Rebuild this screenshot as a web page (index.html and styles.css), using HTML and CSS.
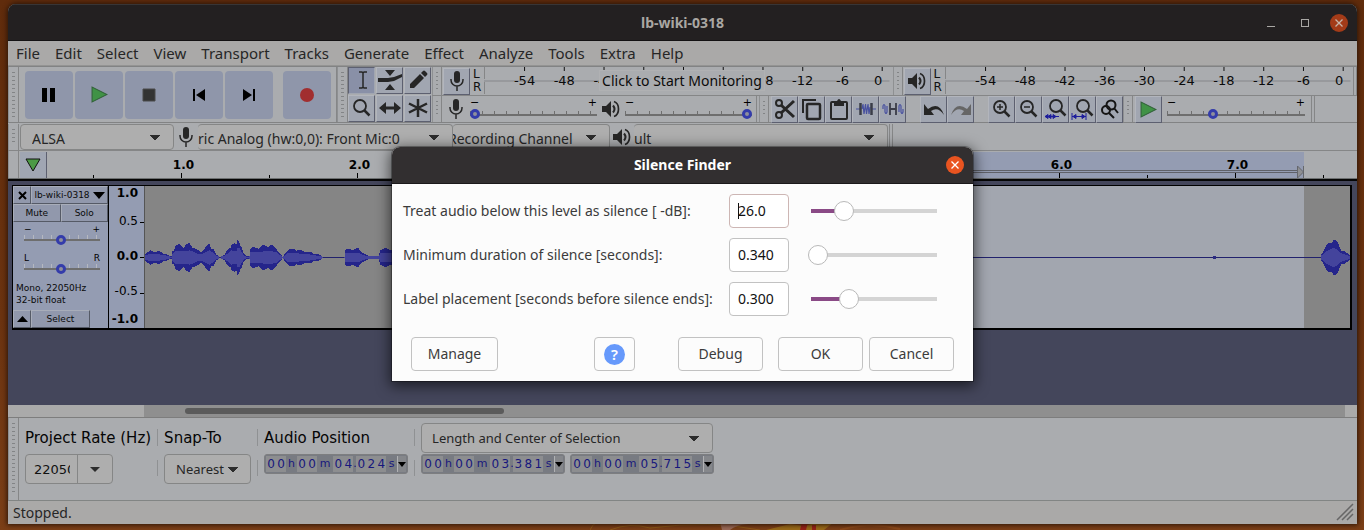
FILE: index.html
```html
<!DOCTYPE html>
<html lang="en">
<head>
<meta charset="utf-8">
<title>lb-wiki-0318</title>
<link rel="stylesheet" href="styles.css">
</head>
<body>
<svg class="defs" aria-hidden="true">
  <symbol id="mic" viewBox="0 0 14 20"><rect x="4" y="0" width="6" height="12" rx="3" fill="#262626"/><path d="M1 8v1a6 6 0 0 0 12 0V8M7 15v5" fill="none" stroke="#262626" stroke-width="1.500"/></symbol>
  <symbol id="speaker" viewBox="0 0 20 18"><path d="M1 6h4l5-5v16l-5-5H1z" fill="#262626"/><path d="M12 5.500q3 3.500 0 7" fill="none" stroke="#262626" stroke-width="2"/><path d="M13 1.500c6 2 6 13 0 15" fill="none" stroke="#262626" stroke-width="1.700"/></symbol>
  <symbol id="cross" viewBox="0 0 10 10"><path d="M1.500 1.500l7 7m0-7l-7 7" stroke="currentColor" stroke-width="1.300"/></symbol>
  <symbol id="play" viewBox="0 0 16 16"><path d="M1 1v14l14-7z" fill="#409246" stroke="#32623a"/></symbol>
  <symbol id="lens" viewBox="0 0 20 20"><circle cx="8" cy="8" r="6" fill="none" stroke="#262626" stroke-width="1.800"/><path d="M12.500 12.500l5 5" stroke="#262626" stroke-width="2.500"/></symbol>
</svg>
<svg class="wallpaper" aria-hidden="true" viewBox="0 0 360 8">
  <path d="M0 8q2-6 8-8M20 8q20-8 40-2 60-8 110 2" fill="none" stroke="#8f5b18"/>
  <path d="M130 0l28 2q-12 1-18 6h-8z" fill="#9a6a58"/>
  <path d="M176 8l24-6 14 2 14-4h16l-10 8z" fill="#9a6b18"/>
  <path d="M212 0h6l-2 8h-6zM222 3h4v5h-4z" fill="#962018"/>
  <path d="M250 8q30-9 60-1" fill="none" stroke="#8d4a1b" stroke-width="2"/>
</svg>

<main class="window">
  <header class="titlebar">
    <span class="titlebar-name">lb-wiki-0318</span>
    <div class="window-controls">
      <button class="control" aria-label="Minimize"><svg width="10" height="10"><path d="M1 8.500h8" stroke="#a9a7a4"/></svg></button>
      <button class="control" aria-label="Maximize"><svg width="10" height="10"><rect x="1.500" y="1.500" width="7" height="7" fill="none" stroke="#a9a7a4"/></svg></button>
      <button class="control close" aria-label="Close window"><svg width="10" height="10"><use href="#cross"/></svg></button>
    </div>
  </header>

  <nav class="menubar">
    <button>File</button><button>Edit</button><button>Select</button><button>View</button><button>Transport</button><button>Tracks</button><button>Generate</button><button>Effect</button><button>Analyze</button><button>Tools</button><button>Extra</button><button>Help</button>
  </nav>

  <section class="dock">
    <div class="toolbar transport">
      <i class="grip"></i>
      <div class="transport-buttons">
        <button aria-label="Pause"><svg width="14" height="14"><path d="M0 0h5v14H0zM8 0h5v14H8z"/></svg></button>
        <button aria-label="Play"><svg width="17" height="17"><use href="#play"/></svg></button>
        <button aria-label="Stop"><svg width="14" height="14"><path d="M1 1h12v12H1z" fill="#333" stroke="#4a4a4a"/></svg></button>
        <button aria-label="Skip to start"><svg width="14" height="14"><path d="M1 1h2v12H1zM13 1v12L4 7z"/></svg></button>
        <button aria-label="Skip to end"><svg width="14" height="14"><path d="M11 1h2v12h-2zM1 1v12l9-6z"/></svg></button>
        <button class="record" aria-label="Record"><svg width="14" height="14"><circle cx="7" cy="7" r="7" fill="#a12e2f"/></svg></button>
      </div>
    </div>
    <div class="toolbar tools">
      <i class="grip"></i>
      <div class="tool-grid">
        <button class="tool active" aria-label="Selection tool"><svg width="20" height="20"><path d="M7 2h3l1 1 1-1h3M7 18h3l1-1 1 1h3M11 3v14" fill="none" stroke="#262626" stroke-width="1.500"/></svg></button>
        <button class="tool" aria-label="Envelope tool"><svg width="24" height="20"><path d="M7 0h10l-5 6zM7 20h10l-5-6zM0 8h10l6-1 8-3v3l-8 4-6 1H0z" fill="#262626"/></svg></button>
        <button class="tool" aria-label="Draw tool"><svg width="20" height="20"><path d="M2 14L12 4l4 4L6 18H2zM13 3l2-2q1-1 2 0l2 2q1 1 0 2l-2 2z" fill="#262626"/></svg></button>
        <button class="tool" aria-label="Zoom tool"><svg width="20" height="20"><use href="#lens"/></svg></button>
        <button class="tool" aria-label="Time shift tool"><svg width="22" height="14"><path d="M0 7l7-6v4.500h8V1l7 6-7 6V8.500H7V13z" fill="#262626"/></svg></button>
        <button class="tool" aria-label="Multi tool"><svg width="20" height="20"><path d="M10 1v18M1 5.500l18 9M1 14.500l18-9" stroke="#262626" stroke-width="2.500"/></svg></button>
      </div>
    </div>
    <div class="dock-rows">
      <div class="dock-row">
        <div class="toolbar meter">
          <i class="grip"></i>
          <button class="tool" aria-label="Recording meter"><svg width="14" height="20"><use href="#mic"/></svg></button>
          <span class="channels"><span>L</span><span>R</span></span>
          <div class="scale"><svg class="scale-svg"></svg><button class="monitor">Click to Start Monitoring</button></div>
        </div>
        <div class="toolbar meter">
          <i class="grip"></i>
          <button class="tool" aria-label="Playback meter"><svg width="20" height="18"><use href="#speaker"/></svg></button>
          <span class="channels"><span>L</span><span>R</span></span>
          <div class="scale"><svg class="scale-svg"></svg></div>
        </div>
        <i class="end"></i>
      </div>
      <div class="dock-row">
        <div class="toolbar mixer">
          <i class="grip"></i>
          <svg class="mixer-icon" height="20"><use href="#mic" width="20"/></svg>
          <label class="level"><span>−</span><span>+</span><input type="range" min="0" max="100" value="0" aria-label="Recording volume"></label>
          <svg class="mixer-icon" height="18"><use href="#speaker" width="20"/></svg>
          <label class="level"><span>−</span><span>+</span><input type="range" min="0" max="100" value="100" aria-label="Playback volume"></label>
        </div>
        <div class="toolbar edit">
          <i class="grip"></i>
          <div class="tool-set">
            <button class="tool" aria-label="Cut"><svg width="22" height="22"><g fill="none" stroke="#262626" stroke-width="2"><circle cx="5" cy="5" r="3"/><circle cx="5" cy="17" r="3"/><path d="M7 7l13 12M7 15L20 3" stroke-width="3"/></g></svg></button>
            <button class="tool" aria-label="Copy"><svg width="22" height="22"><path d="M2 15V2h13" fill="none" stroke="#262626" stroke-width="2"/><rect x="6" y="6" width="13" height="15" rx="1" fill="none" stroke="#262626" stroke-width="2.500"/></svg></button>
            <button class="tool" aria-label="Paste"><svg width="22" height="22"><rect x="3" y="4" width="16" height="17" rx="1" fill="none" stroke="#262626" stroke-width="2"/><path d="M6 3h3q2-4 4 0h3v5H6z" fill="#262626"/></svg></button>
            <button class="tool" aria-label="Trim audio"><svg width="22" height="20"><path d="M1 10h4M17 10h4M7 10l1-5 1 10 1.500-10 1 10 1.500-10 1 10 1-7" fill="none" stroke="#4851a0" stroke-width="1.200"/><path d="M5.500 4v12M16.500 4v12" stroke="#3a3c48" stroke-width="2.500"/></svg></button>
            <button class="tool" aria-label="Silence audio"><svg width="22" height="20"><path d="M1 10V7q1-3 2 0v6q1 3 2 0V7M17 13V7q1-3 2 0v6q1 3 2 0v-3" fill="none" stroke="#4851a0" stroke-width="1.200"/><path d="M8 4v12M14 4v12M8 10h6" stroke="#3a3c48" stroke-width="1.800"/></svg></button>
          </div>
          <div class="tool-set">
            <button class="tool" aria-label="Undo"><svg width="22" height="16"><path d="M1 3v11h10l-3-4q7-5 13 4-5-14-16-6z" fill="#262626"/></svg></button>
            <button class="tool" aria-label="Redo"><svg width="22" height="16"><path d="M21 3v11H11l3-4q-7-5-13 4 5-14 16-6z" fill="#666"/></svg></button>
          </div>
          <div class="tool-set">
            <button class="tool" aria-label="Zoom in"><svg width="20" height="20"><use href="#lens"/><path d="M5 8h6M8 5v6" stroke="#262626" stroke-width="1.500"/></svg></button>
            <button class="tool" aria-label="Zoom out"><svg width="20" height="20"><use href="#lens"/><path d="M5 8h6" stroke="#262626" stroke-width="1.500"/></svg></button>
            <button class="tool" aria-label="Fit selection"><svg width="24" height="22"><use href="#lens" x="4" width="20" height="20"/><path d="M1 18.500h14M1 18.500l3-2v4zM7 16.500v4l-3-2zM9 16.500v4l3-2z" fill="#1e1e9c" stroke="#1e1e9c"/></svg></button>
            <button class="tool" aria-label="Fit project"><svg width="24" height="22"><use href="#lens" x="4" width="20" height="20"/><path d="M1 15v7M15 15v7M1 18.500h14M2 18.500l3-2v4zM14 18.500l-3-2v4z" fill="#1e1e9c" stroke="#1e1e9c"/></svg></button>
            <button class="tool" aria-label="Zoom toggle"><svg width="22" height="20"><g fill="none" stroke="#151515" stroke-width="2"><circle cx="12" cy="6" r="4.500"/><circle cx="7" cy="11" r="4"/><path d="M15 9l4 5M10 14l5 5"/></g></svg></button>
          </div>
        </div>
        <div class="toolbar speed">
          <i class="grip"></i>
          <button class="tool" aria-label="Play at speed"><svg width="17" height="17"><use href="#play"/></svg></button>
          <label class="level"><span>−</span><span>+</span><input type="range" min="0" max="100" value="32" aria-label="Playback speed"></label>
        </div>
        <i class="end"></i>
      </div>
    </div>
  </section>

  <section class="devices">
    <i class="grip"></i>
    <select class="combo host" aria-label="Audio host"><option>ALSA</option></select>
    <svg class="device-icon" width="24" height="20"><use href="#mic" width="24"/></svg>
    <select class="combo input-device" aria-label="Recording device"><option>ric Analog (hw:0,0): Front Mic:0</option></select>
    <select class="combo channel" aria-label="Recording channels"><option>Recording Channel</option></select>
    <svg class="device-icon" width="24" height="18"><use href="#speaker" width="24"/></svg>
    <select class="combo output-device" aria-label="Playback device"><option>ult</option></select>
    <i class="end"></i>
  </section>

  <section class="ruler">
    <i class="grip blank"></i>
    <button class="pin" aria-label="Pinned play head"><svg width="18" height="16"><path d="M2 2h14L9 14z" fill="#4c9a45" stroke="#111"/></svg></button>
    <svg class="ruler-svg" id="ruler"></svg>
  </section>

  <section class="workspace">
    <div class="track">
      <div class="track-panel">
        <div class="panel-row">
          <button class="bevel square" aria-label="Close track"><svg width="9" height="9"><path d="M1 1l7 7m0-7L1 8" stroke="#000" stroke-width="2"/></svg></button>
          <button class="bevel name">lb-wiki-0318<svg width="12" height="7"><path d="M0 0h12L6 7z"/></svg></button>
        </div>
        <div class="panel-row"><button class="bevel">Mute</button><button class="bevel">Solo</button></div>
        <label class="level track-level"><span>−</span><span>+</span><input type="range" value="49" aria-label="Gain"></label>
        <label class="level track-level pan"><span>L</span><span>R</span><input type="range" value="49" aria-label="Pan"></label>
        <p class="track-info">Mono, 22050Hz<br>32-bit float</p>
        <div class="panel-row foot">
          <button class="bevel square" aria-label="Collapse track"><svg width="11" height="6"><path d="M0 6h11L5.500 0z"/></svg></button>
          <button class="bevel select-track">Select</button>
        </div>
      </div>
      <div class="amplitude"><b>1.0</b><span>0.5</span><b>0.0</b><span>-0.5</span><b>-1.0</b></div>
      <svg class="wave" id="wave"></svg>
    </div>
  </section>

  <div class="scrollbar"><div class="scroll-lane"><div class="scroll-thumb"></div></div></div>

  <section class="selection-bar">
    <i class="grip"></i>
    <div class="field">
      <label class="field-name" for="rate">Project Rate (Hz)</label>
      <div class="combo-box"><input id="rate" value="22050"><button aria-label="Choose rate"><svg width="10" height="5"><path d="M0 0h10L5 5z" fill="#2c2c2c"/></svg></button></div>
    </div>
    <i class="rule"></i>
    <div class="field">
      <label class="field-name" for="snap">Snap-To</label>
      <select class="combo snap" id="snap"><option>Nearest</option></select>
    </div>
    <i class="rule"></i>
    <div class="field position">
      <span class="field-name">Audio Position</span>
      <div class="time"><b>0</b><b>0</b><i>h</i><b>0</b><b>0</b><i class="wide">m</i><b>0</b><b>4</b><i class="dot">.</i><b>0</b><b>2</b><b>4</b><i>s</i><button aria-label="Time format"><svg width="8" height="5"><path d="M0 0h8L4 5z"/></svg></button></div>
    </div>
    <i class="rule"></i>
    <div class="field range">
      <select class="combo mode" aria-label="Selection mode"><option>Length and Center of Selection</option></select>
      <div class="times">
        <div class="time"><b>0</b><b>0</b><i>h</i><b>0</b><b>0</b><i class="wide">m</i><b>0</b><b>3</b><i class="dot">.</i><b>3</b><b>8</b><b>1</b><i>s</i><button aria-label="Length format"><svg width="8" height="5"><path d="M0 0h8L4 5z"/></svg></button></div>
        <div class="time"><b>0</b><b>0</b><i>h</i><b>0</b><b>0</b><i class="wide">m</i><b>0</b><b>5</b><i class="dot">.</i><b>7</b><b>1</b><b>5</b><i>s</i><button aria-label="Center format"><svg width="8" height="5"><path d="M0 0h8L4 5z"/></svg></button></div>
      </div>
    </div>
  </section>

  <footer class="status"><span>Stopped.</span><svg width="18" height="18"><path d="M1 17L17 1M6 17L17 6M11 17l6-6" stroke="#666" stroke-width="1.500"/></svg></footer>
</main>

<div class="dialog" role="dialog" aria-labelledby="dialog-title">
  <header class="dialog-title"><span id="dialog-title">Silence Finder</span><button class="control close" aria-label="Close dialog"><svg width="10" height="10"><use href="#cross"/></svg></button></header>
  <form class="dialog-form">
    <label for="level">Treat audio below this level as silence [ -dB]:</label>
    <div class="entry focused"><input id="level" value="26.0"></div>
    <input class="slider" type="range" value="23" style="--fill:23%" aria-label="Level">
    <label for="duration">Minimum duration of silence [seconds]:</label>
    <div class="entry"><input id="duration" value="0.340"></div>
    <input class="slider" type="range" value="0" style="--fill:0%" aria-label="Duration">
    <label for="placement">Label placement [seconds before silence ends]:</label>
    <div class="entry"><input id="placement" value="0.300"></div>
    <input class="slider" type="range" value="28" style="--fill:28%" aria-label="Placement">
  </form>
  <div class="dialog-actions">
    <button>Manage</button>
    <button class="help" aria-label="Help"><span>?</span></button>
    <button class="debug">Debug</button>
    <button class="ok">OK</button>
    <button>Cancel</button>
  </div>
</div>
<script src="app.js"></script>
</body>
</html>
```
FILE: styles.css
```css
* { box-sizing: border-box; }
body {
  margin: 0;
  min-height: 100vh;
  overflow: hidden;
  background: linear-gradient(#602c0c, #6b3310 60%, #7b3f17);
  font: 14px/20px "Noto Sans", sans-serif;
  color: #262626;
}
button, input, select { font: inherit; color: inherit; margin: 0; padding: 0; border: 0; border-radius: 0; background: none; }
select { appearance: none; }
button { display: flex; align-items: center; justify-content: center; }
svg { flex: none; overflow: visible; }
.defs { position: absolute; width: 0; height: 0; }
.wallpaper { position: absolute; left: 590px; bottom: 0; width: 360px; height: 8px; overflow: hidden; }

.window {
  position: relative;
  display: flex;
  flex-direction: column;
  height: calc(100vh - 10px);
  margin: 4px 7px 6px 8px;
  background: #aaacaf;
  border-radius: 8px 8px 0 0;
  box-shadow: 0 0 5px 1px #2b1508;
  overflow: hidden;
}
.titlebar {
  position: relative;
  display: flex;
  align-items: center;
  justify-content: center;
  height: 37px;
  background: #232021;
  border-top: 1px solid #383536;
  border-bottom: 1px solid #141213;
  color: #aaa7a3;
  font-weight: 700;
}
.window-controls { position: absolute; right: 9px; display: flex; align-items: center; gap: 16px; }
.control { width: 18px; height: 18px; }
.control.close { border-radius: 50%; background: #a33b18; color: #c6b5aa; }

.menubar { display: flex; gap: 15px; height: 25px; padding: 0 8px 1px; background: #aaa9a8; border-bottom: 1px solid #949493; font-size: 15px; }

.dock { display: flex; height: 57px; border-top: 1px solid #828384; border-bottom: 1px solid #828384; }
.toolbar { display: flex; align-items: center; }
.grip {
  flex: none;
  align-self: stretch;
  width: 11px;
  padding: 5px 3px;
  border-right: 1px solid #858687;
  border-left: 1px solid #8e9092;
  background: repeating-linear-gradient(#828486 0 1px, transparent 1px 4px) content-box;
}
.grip.blank { background: none; }
.end { flex: none; width: 4px; align-self: stretch; border: 1px solid #858687; border-width: 0 1px; }
.transport-buttons { display: flex; gap: 2px; padding: 0 5px 0 6px; }
.transport-buttons button { width: 48px; height: 48px; border-radius: 4px; background: #8f96aa; }
.transport-buttons .record { margin-left: 8px; }
.tools { border-left: 1px solid #858687; }
.tool-grid { display: grid; grid-template-columns: repeat(3, 28px); grid-template-rows: repeat(2, 28px); }
.tool { flex: none; width: 27px; height: 27px; background: #a1a6b1; border: 1px solid #b2b5bc; border-right-color: #5d6070; border-bottom-color: #5d6070; overflow: hidden; }
.tool.active { background: #8990a7; border-color: #5d6070 #a1a6b1 #a1a6b1 #5d6070; }

.dock-rows { flex: 1; display: flex; flex-direction: column; min-width: 0; }
.dock-row { display: flex; height: 28px; }
.dock-row + .dock-row { height: 27px; border-top: 1px solid #858687; }
.dock-rows .grip { width: 10px; }
.meter { flex: 1; gap: 1px; }
.channels { display: flex; flex-direction: column; width: 12px; padding-left: 2px; font: 12px/13px "DejaVu Sans", sans-serif; color: #111; }
.scale { position: relative; flex: 1; align-self: stretch; margin-right: 3px; }
.scale-svg { width: 100%; height: 27px; font: 13px "DejaVu Sans", sans-serif; fill: #0b0b0b; }
.monitor { position: absolute; left: 115px; top: 3px; width: 166px; height: 21px; background: #aaacaf; border: 1px solid #b0b1b3; color: #0b0b0b; }
.mixer { flex: none; gap: 4px; padding-right: 4px; border-right: 1px solid #858687; }
.mixer-icon { width: 20px; }
.level { display: grid; grid-template-columns: 1fr 1fr; width: 127px; font: 11px/10px "DejaVu Sans", sans-serif; color: #000; }
.level span:nth-child(2) { text-align: right; }
.level input {
  grid-column: 1 / 3;
  appearance: none;
  width: 100%;
  height: 12px;
  background:
    linear-gradient(#6e6e6e, #6e6e6e) 0 6px / 100% 2px no-repeat,
    repeating-linear-gradient(90deg, #6e6e6e 0 1px, transparent 1px 12px) 0 3px / 100% 3px no-repeat;
}
.level input::-webkit-slider-thumb { appearance: none; width: 10px; height: 10px; border-radius: 50%; border: 3px solid #343caa; background: #8e8f9b; }
.edit { flex: none; gap: 2px; }
.mixer + .edit { margin-left: 2px; }
.tool-set { display: flex; margin-right: 12px; }
.tool-set:last-child { margin-right: 0; }
.speed { flex: none; gap: 2px; padding-right: 6px; }
.speed .level { width: 138px; margin-left: 3px; }

.devices { display: flex; align-items: stretch; height: 28px; border-bottom: 1px solid #858687; padding-top: 1px; }
.combo {
  padding: 0 10px;
  border: 1px solid #858686;
  border-radius: 4px;
  color: #262626;
  background:
    linear-gradient(to bottom right, #2c2c2c 50%, transparent 51%) right 13px center / 5px 5px no-repeat,
    linear-gradient(to bottom left, #2c2c2c 50%, transparent 51%) right 18px center / 5px 5px no-repeat,
    #aeaeae;
}
.devices .combo { padding: 3px 10px 0 0; border-left-width: 0; }
.devices .host { width: 154px; margin-left: 1px; padding-left: 11px; border-left-width: 1px; }
.device-icon { width: 24px; align-self: center; }
.input-device { width: 255px; }
.channel { width: 157px; text-indent: -5px; }
.output-device { width: 254px; margin-right: 1px; }

.ruler { display: flex; height: 28px; border-bottom: 1px solid #6c6f70; }
.pin { width: 27px; margin: 1px 0 0 1px; background: #a0a6b3; border-right: 1px solid #5d6070; }
.ruler-svg { flex: 1; width: auto; min-width: 0; height: 27px; font: 700 12px "DejaVu Sans", sans-serif; overflow: hidden; }

.workspace { flex: 1; min-height: 0; padding: 4px 5px 0 4px; border-top: 2px solid #050505; background: #44465b; }
.track { display: flex; height: 145px; border: 1px solid #000; border-right-width: 2px; border-bottom-width: 2px; background: #949cb2; }
.track-panel { display: flex; flex-direction: column; width: 96px; border-right: 1px solid #000; font: 9px/12px "DejaVu Sans", sans-serif; color: #0a0a0a; }
.panel-row { display: flex; height: 18px; }
.bevel { flex: 1; border: 1px solid #a8adb9; border-right-color: #555a66; border-bottom-color: #555a66; background: #9198ac; }
.bevel.square { flex: none; width: 18px; }
.bevel.name { gap: 3px; white-space: nowrap; }
.track-level { width: 76px; margin: 3px 0 0 11px; line-height: 9px; font-size: 9px; }
.track-level.pan { margin-top: 9px; }
.track-level input { height: 11px; background: linear-gradient(#6e6e6e, #6e6e6e) 0 5px / 100% 2px no-repeat, repeating-linear-gradient(90deg, #b5b8c0 0 1px, transparent 1px 9px) 0 1px / 100% 4px no-repeat; }
.track-info { margin: 8px 0 0 3px; }
.foot { margin-top: auto; }
.select-track { flex: none; width: 59px; }
.amplitude {
  display: grid;
  grid-template-rows: 13px 43px 27px 44px 11px;
  align-items: center;
  width: 36px;
  padding-right: 6px;
  text-align: right;
  font: 12px/12px "DejaVu Sans", sans-serif;
  color: #000;
  border-right: 1px solid #555;
  background:
    linear-gradient(#000, #000) right 36px / 4px 1px no-repeat,
    linear-gradient(#000, #000) right 71px / 4px 1px no-repeat,
    linear-gradient(#000, #000) right 107px / 4px 1px no-repeat;
}
.wave { flex: 1; width: auto; min-width: 0; height: 142px; background: #858585; overflow: hidden; }

.scrollbar { height: 13px; padding: 0 12px 0 136px; background: #aaa; border-bottom: 1px solid #7d7d7d; }
.scroll-lane { height: 12px; padding: 3px 0 0 41px; background: #8f8f8f; }
.scroll-thumb { width: 319px; height: 6px; border-radius: 3px; background: #5b5b5b; }

.selection-bar { display: flex; height: 83px; font-family: "DejaVu Sans", sans-serif; border-bottom: 1px solid #828584; }
.selection-bar > .grip { margin-right: 6px; }
.field { padding-top: 10px; }
.field-name { display: block; height: 26px; font-size: 15px; color: #050505; }
.rule { width: 1px; margin: 11px 6px 24px; background: linear-gradient(#8f9193 17px, transparent 17px 31px, #8f9193 31px); }
.combo-box { display: flex; width: 88px; height: 30px; border: 1px solid #858686; border-radius: 4px; background: #aeaeae; overflow: hidden; }
.combo-box input { width: 36px; margin: 0 7px 0 8px; font: 13px "DejaVu Sans", sans-serif; color: #111; }
.combo-box button { flex: 1; border-left: 1px solid #858686; }
.combo.snap { width: 87px; height: 30px; padding-left: 11px; background-position: right 12px center, right 17px center, 0 0; font: 13px "Noto Sans", sans-serif; }
.field.range { padding-top: 5px; }
.combo.mode { display: block; width: 292px; height: 30px; margin-bottom: 1px; font: 13px "Noto Sans", sans-serif; }
.times { display: flex; gap: 5px; }
.time { display: flex; width: 144px; height: 20px; padding: 1px; border: 1px solid #7d7e80; border-radius: 3px; background: #787b82; font: 12px/16px "DejaVu Sans", sans-serif; color: #17177d; }
.time b { width: 10px; font-weight: 400; text-align: center; background: #8d8e90; }
.time i { flex: 2; font-style: normal; font-size: 11px; text-align: center; }
.time i.wide { flex: 3; }
.time i.dot { flex: none; width: 3px; }
.time button { width: 9px; border-left: 1px solid #b0b1b3; background: #85878b; }

.status { display: flex; justify-content: space-between; height: 23px; padding: 2px 3px 0 5px; background: #aaa9a8; }

.dialog {
  position: absolute;
  left: 392px;
  top: 147px;
  width: 581px;
  background: #fcfcfc;
  border-radius: 8px 8px 0 0;
  box-shadow: 0 3px 14px 2px rgba(0, 0, 0, .6), 0 0 0 1px rgba(0, 0, 0, .3);
  color: #3b3b3b;
}
.dialog-title { position: relative; display: flex; align-items: center; justify-content: center; height: 37px; border-radius: 8px 8px 0 0; background: #322f30; border-bottom: 1px solid #1c1a1b; color: #fff; font-weight: 700; }
.dialog-title .close { position: absolute; right: 9px; background: #e95420; color: #fff; }
.dialog-form { display: grid; grid-template-columns: 316px 60px 141px; column-gap: 10px; row-gap: 10px; align-items: center; padding: 10px 11px 0; }
.dialog-form label { white-space: nowrap; }
.entry { display: flex; height: 34px; border: 1px solid #c2c2c2; border-radius: 4px; background: #fff; color: #111; overflow: hidden; }
.entry input { width: 100%; padding-left: 8px; }
.entry.focused { border-color: #cdb6b4; }
.entry.focused input { background: linear-gradient(#111, #111) 8px center / 1px 16px no-repeat; }
.slider { appearance: none; width: 132px; height: 22px; margin-left: 9px; background: linear-gradient(90deg, #8a4a86 var(--fill), #d4d4d4 0) center / 126px 4px no-repeat; }
.slider::-webkit-slider-thumb { appearance: none; width: 20px; height: 20px; border: 1px solid #b9b9b9; border-radius: 50%; background: #fff; }
.dialog-actions { display: flex; padding: 21px 19px 10px; }
.dialog-actions button { width: 85px; height: 34px; border: 1px solid #c2c2c2; border-radius: 4px; }
.dialog-actions button:first-child { width: 87px; }
.dialog-actions .help { width: 41px; margin-left: auto; margin-right: 43px; }
.help span { width: 21px; height: 21px; border-radius: 50%; background: #6699fb; color: #fff; font-weight: 600; font-size: 15px; }
.debug { margin-right: 15px; }
.ok { margin-right: 6px; }
```
FILE: app.js
```js
const make = (parent, tag, attrs, text) => {
  const node = document.createElementNS('http://www.w3.org/2000/svg', tag);
  for (const key in attrs) node.setAttribute(key, attrs[key]);
  if (text !== undefined) node.textContent = text;
  parent.append(node);
  return node;
};

// Decibel scales; the middle labels give way to the monitoring button
document.querySelectorAll('.scale-svg').forEach(svg => {
  const covered = svg.nextElementSibling ? [3, 4, 5] : [];
  make(svg, 'path', { d: 'M.5 0v12M.5 15v12', stroke: '#858687' });
  make(svg, 'line', { x1: 0, x2: '100%', y1: 14, y2: 14, stroke: '#85868a' });
  for (let i = 0; i < 10; i++) {
    const x = (10 + i * 9.8) + '%';
    make(svg, 'line', { x1: x, x2: x, y1: 0, y2: 4, stroke: '#111' });
    if (!covered.includes(i)) make(svg, 'text', { x, y: 18, 'text-anchor': i === 9 ? 'end' : 'middle' }, i * 6 - 54);
  }
});

// Time ruler: a tick every half second, a label on the whole seconds
const ruler = document.getElementById('ruler');
make(ruler, 'rect', { x: 666, y: 1, width: 591, height: 26, fill: '#949cb2' });
make(ruler, 'path', { d: 'M666 19.5h585M666 21.5h585', stroke: '#5f6168' });
make(ruler, 'path', { d: 'M1250.5 15v12l6-6zM1256.500 15v12', fill: '#8e8f92', stroke: '#65676c' });
for (let i = 0; i < 15; i++) {
  const x = Math.round(46 + i * 87.85) + .5;
  make(ruler, 'line', { x1: x, x2: x, y1: i % 2 ? 22 : 24, y2: 27, stroke: '#000' });
  if ([1, 3, 11, 13].includes(i)) make(ruler, 'text', { x: x + 2, y: 18, 'text-anchor': 'middle' }, ((i + 1) / 2).toFixed(1));
}

// Waveform: [x, half height] pairs joined linearly, with a small ripple
const wave = document.getElementById('wave');
make(wave, 'rect', { x: 568, y: 0, width: 591, height: 142, fill: '#a2a6af' });
make(wave, 'path', { d: 'M0 71.5h1400', stroke: '#22226d' });
const shapes = [
  [[0,4],[5,6],[13,5.5],[20,3],[26,.5],[27,6],[30,11],[36,12],[39,11],[44,13],[47,11],[50,8],[55,5],[60,9],[64,13],[68,8],[71,2],[73,1]],
  [[76,1],[79,2],[84,10],[86,13],[91,12],[92,17],[94,17],[95,13],[98,4],[101,.5],[104,1],[105,9],[110,9],[118,11],[125,12],[131,9],[137,0],[142,7],[149,8],[157,6],[164,5],[170,3],[175,2],[177,0]],
  [[199,0],[200,7],[206,8],[213,8],[219,3],[224,1],[233,1],[235,8],[247,8]],
  [[1176,3],[1180,10],[1185,15],[1188,18],[1192,14],[1196,7],[1201,4],[1204,2],[1205,5],[1207,12]]
];
const draw = (points, scale, fill) => {
  let top = '', bottom = '';
  for (let x = points[0][0]; x <= points.at(-1)[0]; x++) {
    let k = 1;
    while (k < points.length - 1 && points[k][0] < x) k++;
    const [x0, a] = points[k - 1], [x1, b] = points[k];
    const ripple = scale === 1 ? .8 + .3 * Math.abs(Math.sin(x * 12.9)) : 1;
    const h = Math.round((a + (b - a) * (x - x0) / (x1 - x0)) * scale * ripple) + .5;
    top += `${x} ${71.5 - h} ${x + 1} ${71.5 - h} `;
    bottom = `${x + 1} ${71.5 + h} ${x} ${71.5 + h} ` + bottom;
  }
  make(wave, 'polygon', { points: top + bottom, fill });
};
shapes.forEach(points => { draw(points, 1, '#25258b'); draw(points, .5, '#44449c'); });
make(wave, 'rect', { x: 1068, y: 70, width: 3, height: 3, fill: '#2b2b82' });
```
